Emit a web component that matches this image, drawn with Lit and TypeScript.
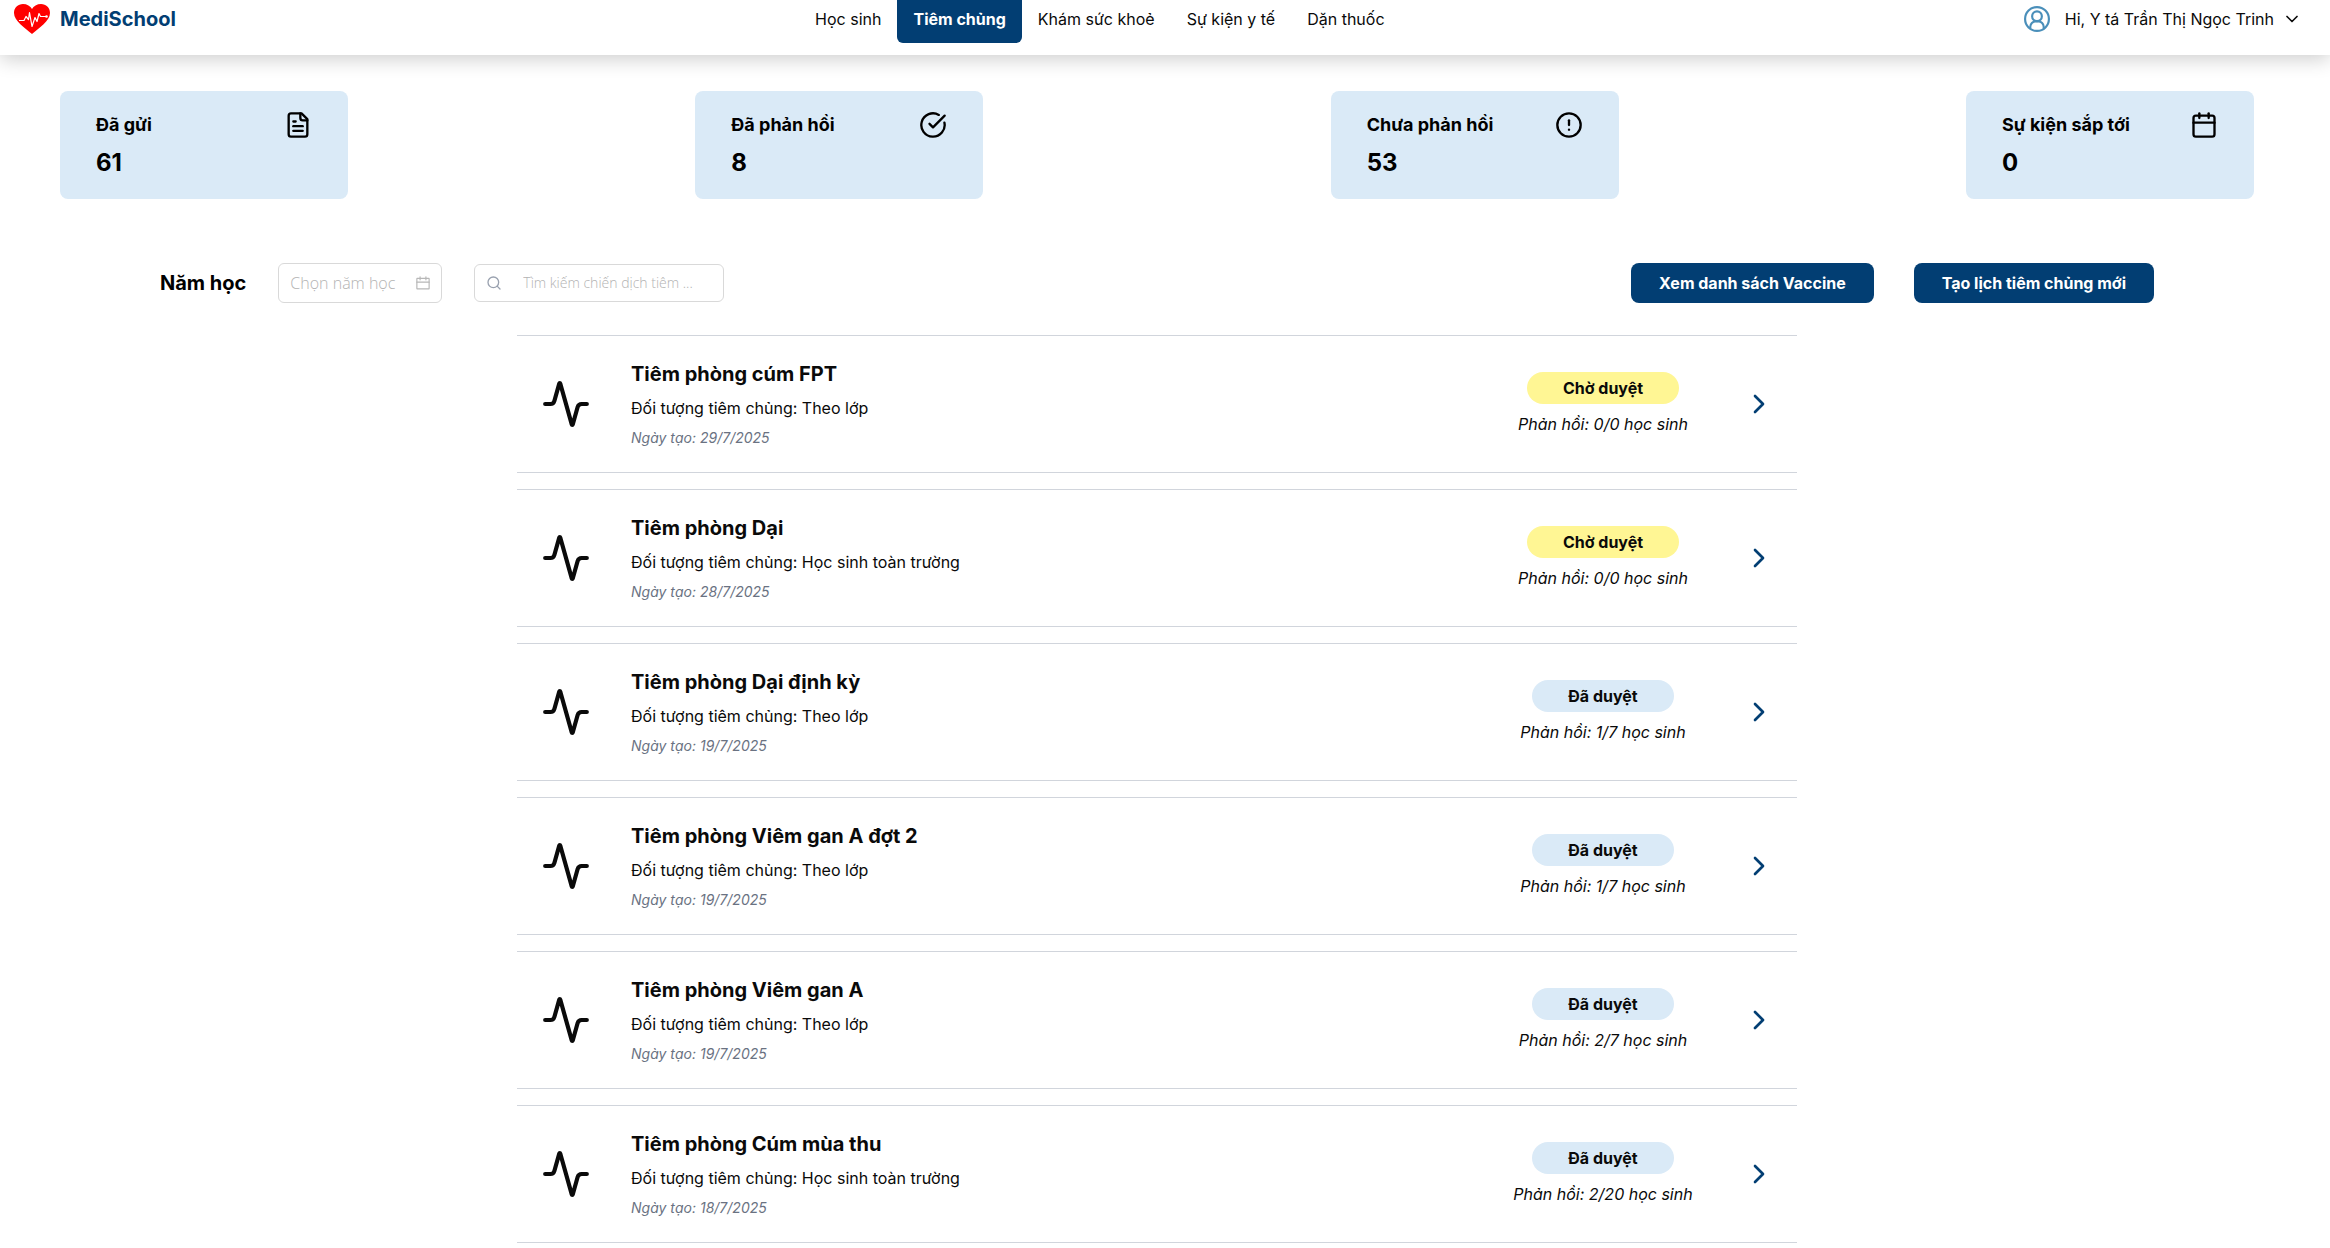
import { LitElement, html, svg, css } from "lit";
import { customElement, property } from "lit/decorators.js";

const paths: Record<string, unknown> = {
  file: svg`<path d="M15 2H6a2 2 0 0 0-2 2v16a2 2 0 0 0 2 2h12a2 2 0 0 0 2-2V7Z"/><path d="M14 2v4a2 2 0 0 0 2 2h4"/><path d="M10 9H8"/><path d="M16 13H8"/><path d="M16 17H8"/>`,
  check: svg`<path d="M21.8 10A10 10 0 1 1 17 3.34"/><path d="m9 11 3 3L22 4"/>`,
  alert: svg`<circle cx="12" cy="12" r="10"/><path d="M12 8v4"/><path d="M12 16h.01"/>`,
  calendar: svg`<path d="M8 2v4"/><path d="M16 2v4"/><rect width="18" height="18" x="3" y="4" rx="2"/><path d="M3 10h18"/>`,
  picker: svg`<path d="M7 1.500v5"/><path d="M17 1.500v5"/><rect width="21" height="18" x="1.500" y="4" rx="0.500"/><path d="M1.500 10.500h21"/>`,
  activity: svg`<path d="M22 12h-2.48a2 2 0 0 0-1.93 1.46l-2.35 8.36a.25.25 0 0 1-.48 0L9.24 2.18a.25.25 0 0 0-.48 0l-2.35 8.36A2 2 0 0 1 4.49 12H2"/>`,
  right: svg`<path d="m9 18 6-6-6-6"/>`,
  down: svg`<path d="m6 9 6 6 6-6"/>`,
  search: svg`<circle cx="11" cy="11" r="8"/><path d="m21 21-4.3-4.3"/>`,
  user: svg`<circle cx="12" cy="12" r="11"/><circle cx="12" cy="9.500" r="4.500"/><path d="M5.800 20.500v-1.300a5 5 0 0 1 5-5h2.400a5 5 0 0 1 5 5v1.300"/>`,
};

const icon = (name: string, cls = "") => html`<svg
  class="icon ${cls}" viewBox="0 0 24 24" fill="none" stroke="currentColor"
  stroke-width="2" stroke-linecap="round" stroke-linejoin="round" aria-hidden="true"
>${paths[name]}</svg>`;

const iconStyles = css`
  .icon { display: block; flex: none; width: 24px; height: 24px; }
`;

const links = ["Học sinh", "Tiêm chủng", "Khám sức khoẻ", "Sự kiện y tế", "Dặn thuốc"];

const stats = [
  { label: "Đã gửi", value: 61, icon: "file" },
  { label: "Đã phản hồi", value: 8, icon: "check" },
  { label: "Chưa phản hồi", value: 53, icon: "alert" },
  { label: "Sự kiện sắp tới", value: 0, icon: "calendar" },
];

interface Campaign {
  title: string;
  target: string;
  date: string;
  approved: boolean;
  replies: string;
}

const campaigns: Campaign[] = [
  { title: "Tiêm phòng cúm FPT", target: "Theo lớp", date: "29/7/2025", approved: false, replies: "0/0" },
  { title: "Tiêm phòng Dại", target: "Học sinh toàn trường", date: "28/7/2025", approved: false, replies: "0/0" },
  { title: "Tiêm phòng Dại định kỳ", target: "Theo lớp", date: "19/7/2025", approved: true, replies: "1/7" },
  { title: "Tiêm phòng Viêm gan A đợt 2", target: "Theo lớp", date: "19/7/2025", approved: true, replies: "1/7" },
  { title: "Tiêm phòng Viêm gan A", target: "Theo lớp", date: "19/7/2025", approved: true, replies: "2/7" },
  { title: "Tiêm phòng Cúm mùa thu", target: "Học sinh toàn trường", date: "18/7/2025", approved: true, replies: "2/20" },
];

@customElement("medi-header")
export class MediHeader extends LitElement {
  static styles = [iconStyles, css`
    :host { display: block; }
    .bar {
      display: flex; justify-content: space-between; align-items: flex-start;
      padding: 0 28px 12px 12px; background: #fff;
      box-shadow: 0 4px 20px rgba(0, 0, 0, 0.2);
    }
    .brand {
      display: flex; align-items: center; gap: 8px; height: 38px;
      color: #023e73; font-size: 20px; font-weight: 700; text-decoration: none;
    }
    .heart { display: block; width: 40px; height: 36px; }
    .nav { display: flex; }
    .link {
      padding: 7px 16px 12px; line-height: 24px; color: #0a0a0a; text-decoration: none;
      border-radius: 0 0 6px 6px;
    }
    .link.active { background: #023e73; color: #fff; font-weight: 700; }
    .user {
      display: flex; align-items: center; height: 38px; padding: 0; border: 0;
      background: none; font: inherit; color: #0a0a0a; cursor: pointer;
    }
    .avatar { width: 26px; height: 26px; margin-right: 15px; color: #4a8fba; }
    .chevron { width: 20px; height: 20px; margin-left: 8px; }
  `];

  render() {
    return html`
      <header class="bar">
        <a class="brand" href="#">
          <svg class="heart" viewBox="0 0 40 36" aria-hidden="true">
            <path fill="#ff0000" d="M20 33C13 27 2 20 2 12C2 6.500 6 3 11 3C15 3 18.500 5 20 8C21.500 5 25 3 29 3C34 3 38 6.500 38 12C38 20 27 27 20 33Z"/>
            <path fill="none" stroke="#fff" stroke-width="1.200" stroke-linejoin="round" d="M7 19.500h5l2-4 2.500 3 1-7 2.500 14 3-9 2 4 2-8 1.500 3h6"/>
            <circle cx="34.500" cy="15.500" r="1.300" fill="#fff"/>
          </svg>
          MediSchool
        </a>
        <nav class="nav">
          ${links.map((l, i) => html`<a class="link ${i === 1 ? "active" : ""}" href="#">${l}</a>`)}
        </nav>
        <button class="user" type="button">
          ${icon("user", "avatar")}<span>Hi, Y tá Trần Thị Ngọc Trinh</span>${icon("down", "chevron")}
        </button>
      </header>
    `;
  }
}

@customElement("campaign-row")
export class CampaignRow extends LitElement {
  @property({ attribute: false }) campaign!: Campaign;

  static styles = [iconStyles, css`
    :host { display: block; }
    .row {
      display: flex; align-items: center; gap: 40px; padding: 24px 22px 24px 24px;
      border-top: 1px solid #d1d5dc; border-bottom: 1px solid #d1d5dc;
      color: #0a0a0a; text-decoration: none;
    }
    .pulse { width: 50px; height: 50px; }
    .info { display: flex; flex-direction: column; gap: 8px; flex: 1; }
    .title { margin: 0; font-size: 20px; line-height: 28px; font-weight: 700; }
    .text { margin: 0; line-height: 24px; }
    .date { margin: 0; font-size: 14px; line-height: 20px; font-style: italic; color: #6a7282; }
    .status { display: flex; flex-direction: column; align-items: center; gap: 8px; width: 200px; }
    .badge { padding: 4px 36px; border-radius: 16px; line-height: 24px; font-weight: 700; background: #daeaf7; }
    .badge.pending { background: #fff694; }
    .reply { margin: 0; line-height: 24px; font-style: italic; }
    .go { width: 32px; height: 32px; color: #023e73; }
  `];

  render() {
    const c = this.campaign;
    return html`
      <a class="row" href="#">
        ${icon("activity", "pulse")}
        <div class="info">
          <h2 class="title">${c.title}</h2>
          <p class="text">Đối tượng tiêm chủng: ${c.target}</p>
          <p class="date">Ngày tạo: ${c.date}</p>
        </div>
        <div class="status">
          <span class="badge ${c.approved ? "" : "pending"}">${c.approved ? "Đã duyệt" : "Chờ duyệt"}</span>
          <p class="reply">Phản hồi: ${c.replies} học sinh</p>
        </div>
        ${icon("right", "go")}
      </a>
    `;
  }
}

@customElement("app-root")
export class AppRoot extends LitElement {
  static styles = [iconStyles, css`
    :host {
      display: block; background: #fff; color: #000;
      font-family: Inter, "Liberation Sans", sans-serif; font-size: 16px; line-height: 24px;
    }
    .page { padding: 36px 76px 4px 60px; }
    .stats { display: flex; justify-content: space-between; }
    .stat {
      box-sizing: border-box; width: 288px; padding: 20px 36px; border-radius: 8px;
      background: #daeaf7; display: flex; flex-direction: column; gap: 8px;
    }
    .stat-head { display: flex; justify-content: space-between; align-items: center; }
    .stat-label { margin: 0; font-size: 18px; line-height: 28px; font-weight: 700; }
    .stat-icon { width: 28px; height: 28px; }
    .stat-value { margin: 0; font-size: 24px; line-height: 32px; font-weight: 700; }
    .tools { display: flex; align-items: center; gap: 32px; padding: 64px 100px 32px; }
    .year-label { font-size: 20px; line-height: 28px; font-weight: 700; }
    .field {
      display: flex; align-items: center; box-sizing: border-box; border: 1px solid #d9d9d9;
      border-radius: 6px; padding: 0 11px;
    }
    .year { width: 164px; height: 40px; }
    .search { width: 250px; height: 38px; }
    .input {
      flex: 1; min-width: 0; border: 0; padding: 0; outline: 0; background: none; font-weight: 300;
      font-family: "Open Sans", "Noto Sans", sans-serif; font-size: 16px; line-height: 24px;
    }
    .input::placeholder { color: #b3b3b3; opacity: 1; }
    .search .input { font-size: 14px; margin-left: 21px; }
    .cal { width: 14px; height: 14px; color: #b7b7b7; }
    .lens { width: 16px; height: 16px; color: #99a1af; }
    .actions { display: flex; gap: 40px; margin-left: auto; }
    .btn {
      height: 40px; padding: 0 28px; border: 0; border-radius: 8px; background: #023e73;
      color: #fff; font: inherit; font-weight: 700; cursor: pointer;
    }
    .list { display: flex; flex-direction: column; gap: 16px; max-width: 1280px; margin: 0 auto; }
  `];

  render() {
    return html`
      <medi-header></medi-header>
      <main class="page">
        <section class="stats">
          ${stats.map((s) => html`
            <div class="stat">
              <div class="stat-head">
                <h2 class="stat-label">${s.label}</h2>
                ${icon(s.icon, "stat-icon")}
              </div>
              <p class="stat-value">${s.value}</p>
            </div>
          `)}
        </section>
        <div class="tools">
          <label class="year-label" for="year">Năm học</label>
          <div class="field year">
            <input class="input" id="year" type="text" placeholder="Chọn năm học" />
            ${icon("picker", "cal")}
          </div>
          <div class="field search">
            ${icon("search", "lens")}
            <input class="input" type="search" aria-label="Tìm kiếm" placeholder="Tìm kiếm chiến dịch tiêm ..." />
          </div>
          <div class="actions">
            <button class="btn" type="button">Xem danh sách Vaccine</button>
            <button class="btn" type="button">Tạo lịch tiêm chủng mới</button>
          </div>
        </div>
        <section class="list">
          ${campaigns.map((c) => html`<campaign-row .campaign=${c}></campaign-row>`)}
        </section>
      </main>
    `;
  }
}
